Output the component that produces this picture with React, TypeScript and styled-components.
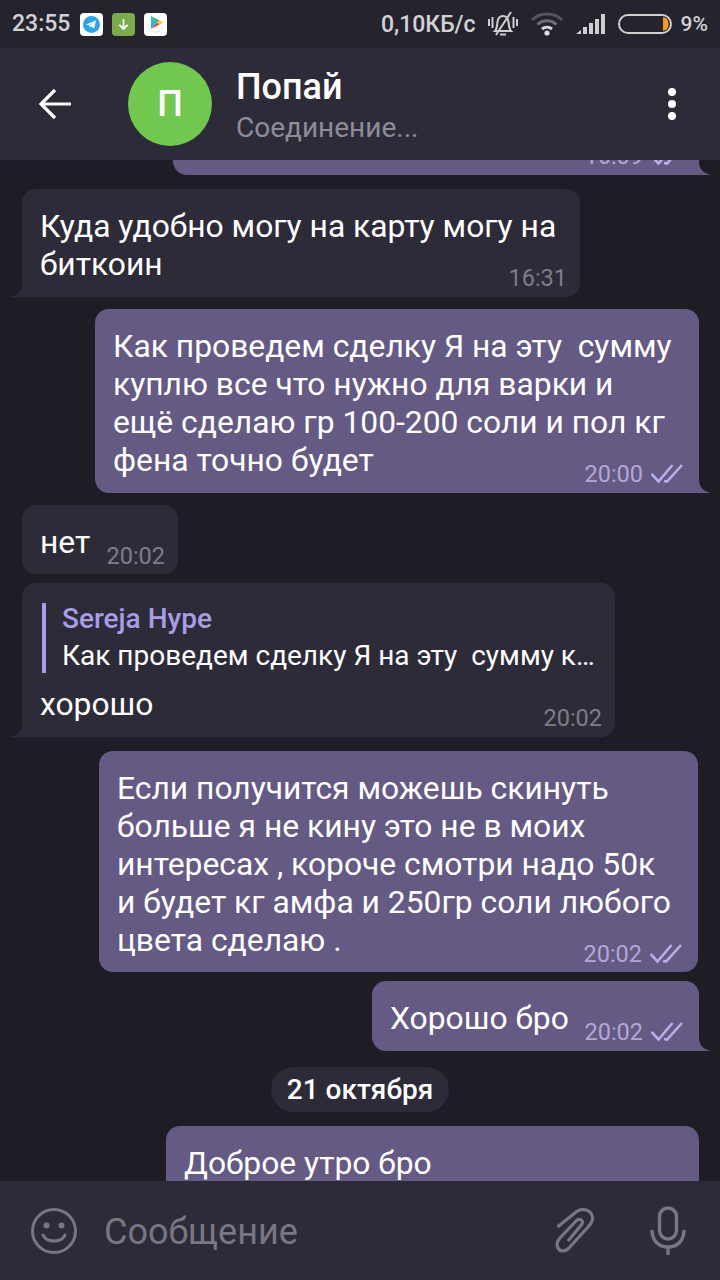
import React from "react";
import styled, { createGlobalStyle } from "styled-components";

const GlobalStyle = createGlobalStyle`
  html, body {
    margin: 0;
    padding: 0;
    background: #1e1d26;
  }
  * {
    box-sizing: border-box;
  }
`;

const Screen = styled.div`
  width: 720px;
  height: 1280px;
  display: flex;
  flex-direction: column;
  overflow: hidden;
  background: #1e1d26;
  font-family: Roboto, "Noto Sans", sans-serif;
  color: #fff;
`;

const StatusBar = styled.div`
  height: 48px;
  flex: none;
  display: flex;
  align-items: center;
  padding: 0 12px;
  background: #25232e;
  color: #d2d2d4;
  font-size: 23px;
  font-weight: 500;
`;

const StatusTime = styled.span`
  width: 68px;
  margin-top: -1px;
`;

const AppIcons = styled.div`
  display: flex;
  gap: 9px;
`;

const AppIcon = styled.div<{ $bg: string }>`
  width: 23px;
  height: 23px;
  border-radius: 4px;
  background: ${(p) => p.$bg};
  display: flex;
  align-items: center;
  justify-content: center;
`;

const StatusRight = styled.div`
  margin-left: auto;
  display: flex;
  align-items: center;
`;

const Speed = styled.span`
  margin-right: 12px;
`;

const BatteryText = styled.span`
  font-size: 21px;
`;

const StatusIcon = styled.svg<{ $gap: number }>`
  flex: none;
  margin-right: ${(p) => p.$gap}px;
`;

const Header = styled.header`
  height: 112px;
  flex: none;
  display: flex;
  align-items: center;
  padding: 0 0 0 38px;
  background: #2e2b39;
  z-index: 2;
`;

const Avatar = styled.div`
  width: 84px;
  height: 84px;
  margin-left: 57px;
  border-radius: 50%;
  background: #72c74f;
  display: flex;
  align-items: center;
  justify-content: center;
  font-size: 36px;
  font-weight: 500;
`;

const HeaderText = styled.div`
  margin-left: 24px;
  padding-top: 6px;
  display: flex;
  flex-direction: column;
`;

const Title = styled.div`
  font-size: 36px;
  font-weight: 500;
  line-height: 40px;
`;

const Subtitle = styled.div`
  font-size: 28px;
  line-height: 38px;
  color: #8f8c9a;
  margin-top: 2px;
`;

const Dots = styled.div`
  margin-left: auto;
  margin-right: 44px;
  display: flex;
  flex-direction: column;
  gap: 4px;
`;

const Dot = styled.span`
  width: 8px;
  height: 8px;
  border-radius: 50%;
  background: #fff;
`;

const Chat = styled.main`
  flex: 1;
  min-height: 0;
  overflow: hidden;
  display: flex;
  flex-direction: column;
`;

const Row = styled.div<{ $out?: boolean; $top: number; $right?: number }>`
  display: flex;
  flex: none;
  justify-content: ${(p) => (p.$out ? "flex-end" : "flex-start")};
  margin-top: ${(p) => p.$top}px;
  padding: ${(p) => (p.$out ? `0 ${p.$right ?? 21}px 0 0` : "0 0 0 22px")};
`;

const Bubble = styled.div<{ $out?: boolean; $w: number; $tail?: boolean }>`
  position: relative;
  flex: none;
  width: ${(p) => p.$w}px;
  padding: 18px 17px ${(p) => (p.$tail ? 14 : 13)}px 18px;
  border-radius: 14px;
  ${(p) =>
    p.$tail &&
    `border-bottom-${p.$out ? "right" : "left"}-radius: 0;`}
  background: ${(p) => (p.$out ? "#645a84" : "#2e2b39")};
  font-size: 31.8px;
  line-height: 38px;
  color: #fff;
  white-space: nowrap;
`;

const Tail = styled.svg<{ $out?: boolean }>`
  position: absolute;
  bottom: 0;
  width: 12px;
  height: 14px;
  ${(p) => (p.$out ? "right: -12px;" : "left: -12px;")}
`;

const Meta = styled.div<{ $out?: boolean; $low?: boolean }>`
  position: absolute;
  right: ${(p) => (p.$out ? "16px" : "13px")};
  bottom: ${(p) => (p.$low ? 4 : 5)}px;
  display: flex;
  align-items: center;
  gap: 8px;
  font-size: 23.5px;
  line-height: 28px;
  color: ${(p) => (p.$out ? "#b3a7d7" : "#7f7c8a")};
`;

const Quote = styled.div`
  border-left: 4px solid #a99de6;
  padding-left: 16px;
  height: 70px;
  margin: 2px 0 12px 2px;
  display: flex;
  flex-direction: column;
  justify-content: center;
`;

const QuoteName = styled.div`
  color: #a99de6;
  font-size: 28px;
  font-weight: 500;
  line-height: 36px;
`;

const QuoteText = styled.div`
  font-size: 28px;
  line-height: 38px;
  white-space: nowrap;
`;

const DateRow = styled.div`
  flex: none;
  margin-top: 16px;
  display: flex;
  justify-content: center;
`;

const DatePill = styled.div`
  height: 45px;
  padding: 0 16px;
  border-radius: 23px;
  background: #2e2b39;
  display: flex;
  align-items: center;
  font-size: 28px;
  font-weight: 500;
`;

const Composer = styled.footer`
  height: 99px;
  flex: none;
  display: flex;
  align-items: center;
  padding: 0 0 0 31px;
  background: #2e2b39;
  color: #797684;
`;

const Placeholder = styled.div`
  margin: 3px 0 0 27px;
  font-size: 36px;
  flex: 1;
`;

const ComposerIcon = styled.svg<{ $gap: number }>`
  margin-right: ${(p) => p.$gap}px;
  flex: none;
`;

const TailIcon = ({ out }: { out?: boolean }) => (
  <Tail $out={out} viewBox="0 0 12 14">
    <path
      d={out ? "M0 0C0 7 3 12 12 14H0Z" : "M12 0C12 7 9 12 0 14H12Z"}
      fill={out ? "#645a84" : "#2e2b39"}
    />
  </Tail>
);

const Checks = () => (
  <svg width="32" height="20" viewBox="0 0 32 20">
    <path
      d="M0.5 10L7.5 17.5L21.5 1M13 17L16 17.5L31 1"
      fill="none"
      stroke="#b9aeea"
      strokeWidth="2.6"
    />
  </svg>
);

const Time = ({
  out,
  low,
  children,
}: React.PropsWithChildren<{ out?: boolean; low?: boolean }>) => (
  <Meta $out={out} $low={low}>
    <span>{children}</span>
    {out && <Checks />}
  </Meta>
);

const App = () => {
  return (
    <Screen>
      <GlobalStyle />
      <StatusBar>
        <StatusTime>23:55</StatusTime>
        <AppIcons>
          <AppIcon $bg="#fff">
            <svg width="17" height="17" viewBox="0 0 19 19">
              <circle cx="9.5" cy="9.5" r="9.5" fill="#2ca5e0" />
              <path d="M3.5 9.5L14.5 5L12.5 14L9 11.5L7.5 13L7 10.5L12 7L6 10.2Z" fill="#fff" />
            </svg>
          </AppIcon>
          <AppIcon $bg="#7cab4d">
            <svg width="13" height="13" viewBox="0 0 14 14">
              <path d="M7 1V12M2.5 7.5L7 12L11.5 7.5" fill="none" stroke="#fff" strokeWidth="1.8" />
            </svg>
          </AppIcon>
          <AppIcon $bg="#fff">
            <svg width="19" height="20" viewBox="0 0 19 20">
              <path d="M5 2L11 8.5L5 15Z" fill="#2cb6e8" />
              <path d="M5 2L13.5 6.5L11 8.5Z" fill="#35b56a" />
              <path d="M5 15L13.5 10.5L11 8.5Z" fill="#e8433f" />
              <path d="M13.5 6.5L17 8.5L13.5 10.5L11 8.5Z" fill="#f7c227" />
              <path d="M2 13C5 20 14 20 17 13" fill="none" stroke="#d8d8d8" strokeWidth="0.8" />
            </svg>
          </AppIcon>
        </AppIcons>
        <StatusRight>
          <Speed>0,10КБ/с</Speed>
          <StatusIcon $gap={13} width="30" height="26" viewBox="0 0 30 26">
            <g fill="none" stroke="#cfcfd1" strokeWidth="2">
              <path d="M7 20C9 18 9 14 9.5 11C10 7 12 5 15 5C18 5 20 7 20.5 11C21 14 21 18 23 20Z" />
              <path d="M12 23.5H18" />
              <path d="M8 24L23 1" />
              <path d="M1 8V15M4.5 6V17M25.5 6V17M29 8V15" />
            </g>
          </StatusIcon>
          <StatusIcon $gap={13} width="32" height="24" viewBox="0 0 32 24">
            <path d="M1 8C9 0 23 0 31 8" fill="none" stroke="#55535c" strokeWidth="3" />
            <path d="M6.5 12.5C12 7.5 20 7.5 25.5 12.5" fill="none" stroke="#6f6d76" strokeWidth="3" />
            <path d="M11 17C14 14.5 18 14.5 21 17" fill="none" stroke="#d8d8da" strokeWidth="3" />
            <circle cx="16" cy="21" r="2.6" fill="#e0e0e2" />
          </StatusIcon>
          <StatusIcon $gap={12} width="30" height="20" viewBox="0 0 30 20">
            <path d="M0 20L5 16V20Z" fill="#cfcfd1" />
            <rect x="7" y="13" width="4" height="7" fill="#cfcfd1" />
            <rect x="13" y="9" width="4" height="11" fill="#cfcfd1" />
            <rect x="19" y="5" width="4" height="15" fill="#cfcfd1" />
            <rect x="25" y="0" width="4" height="20" fill="#cfcfd1" />
          </StatusIcon>
          <StatusIcon $gap={9} width="54" height="20" viewBox="0 0 54 20">
            <rect x="1" y="1" width="52" height="18" rx="9" fill="none" stroke="#cfcfd1" strokeWidth="2" />
            <path d="M45 3.5H46C49 3.5 50.5 6.5 50.5 10C50.5 13.5 49 16.5 46 16.5H45Z" fill="#f59a1c" />
          </StatusIcon>
          <BatteryText>9%</BatteryText>
        </StatusRight>
      </StatusBar>

      <Header>
        <svg width="33" height="32" viewBox="0 0 33 32">
          <path d="M33 16H4M17 2L3 16L17 30" fill="none" stroke="#fff" strokeWidth="3.2" />
        </svg>
        <Avatar>П</Avatar>
        <HeaderText>
          <Title>Попай</Title>
          <Subtitle>Соединение...</Subtitle>
        </HeaderText>
        <Dots>
          <Dot />
          <Dot />
          <Dot />
        </Dots>
      </Header>

      <Chat>
        <Row $out $top={-60}>
          <Bubble $out $tail $w={526} style={{ height: 75 }}>
            <TailIcon out />
            <Time out>16:09</Time>
          </Bubble>
        </Row>
        <Row $top={14}>
          <Bubble $tail $w={558}>
            Куда удобно могу на карту могу на
            <br />
            биткоин
            <TailIcon />
            <Time>16:31</Time>
          </Bubble>
        </Row>
        <Row $out $top={12}>
          <Bubble $out $tail $w={604}>
            Как проведем сделку Я на эту&nbsp; сумму
            <br />
            куплю все что нужно для варки и
            <br />
            ещё сделаю гр 100-200 соли и пол кг
            <br />
            фена точно будет
            <TailIcon out />
            <Time out>20:00</Time>
          </Bubble>
        </Row>
        <Row $top={12}>
          <Bubble $w={156}>
            нет
            <Time low>20:02</Time>
          </Bubble>
        </Row>
        <Row $top={9}>
          <Bubble $tail $w={593}>
            <Quote>
              <QuoteName>Sereja Hype</QuoteName>
              <QuoteText>Как проведем сделку Я на эту&nbsp; сумму к…</QuoteText>
            </Quote>
            хорошо
            <TailIcon />
            <Time>20:02</Time>
          </Bubble>
        </Row>
        <Row $out $right={22} $top={14}>
          <Bubble $out $w={599}>
            Если получится можешь скинуть
            <br />
            больше я не кину это не в моих
            <br />
            интересах , короче смотри надо 50к
            <br />
            и будет кг амфа и 250гр соли любого
            <br />
            цвета сделаю .
            <Time out low>20:02</Time>
          </Bubble>
        </Row>
        <Row $out $top={9}>
          <Bubble $out $tail $w={327}>
            Хорошо бро
            <TailIcon out />
            <Time out>20:02</Time>
          </Bubble>
        </Row>
        <DateRow>
          <DatePill>21 октября</DatePill>
        </DateRow>
        <Row $out $top={14}>
          <Bubble $out $w={533}>
            Доброе утро бро
          </Bubble>
        </Row>
      </Chat>

      <Composer>
        <svg width="46" height="46" viewBox="0 0 46 46">
          <g fill="none" stroke="#797684" strokeWidth="3">
            <circle cx="23" cy="23" r="21.5" />
            <path d="M12 27C16 35 30 35 34 27" strokeLinecap="round" />
          </g>
          <circle cx="15.5" cy="17.5" r="3" fill="#797684" />
          <circle cx="30.5" cy="17.5" r="3" fill="#797684" />
        </svg>
        <Placeholder>Сообщение</Placeholder>
        <ComposerIcon $gap={55} width="40" height="46" viewBox="0 0 40 46">
          <path
            d="M2.5 19L21 4C28 -1 36 2 37.5 9C38 13 36 16 33 19L14 40C10 44 5 44 3 40C1 36 2 33 5 30L21 13C24 10 29 12 27 16L13 33"
            fill="none"
            stroke="#797684"
            strokeWidth="3.2"
          />
        </ComposerIcon>
        <ComposerIcon $gap={34} width="36" height="50" viewBox="0 0 36 50">
          <g fill="none" stroke="#797684" strokeWidth="3.4">
            <rect x="9.5" y="2" width="17" height="31" rx="8.5" />
            <path d="M2 24C2 34 8 41 18 41C28 41 34 34 34 24M18 41V49" />
          </g>
        </ComposerIcon>
      </Composer>
    </Screen>
  );
};

export default App;
